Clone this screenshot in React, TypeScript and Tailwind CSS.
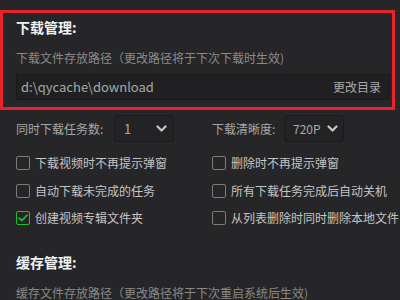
import React from "react";

const font = { fontFamily: '"Noto Sans CJK SC", "Noto Sans", sans-serif' };

function Chevron() {
  return (
    <svg width="11" height="8" viewBox="0 0 11 8" className="shrink-0">
      <polyline points="1.5,1.5 5.5,5.5 9.5,1.5" fill="none" stroke="#c8c8c8" strokeWidth="2.2" strokeLinecap="round" strokeLinejoin="round" />
    </svg>
  );
}

function Check({ label, checked }: { label: string; checked?: boolean }) {
  return (
    <div className="flex items-center h-[20px] whitespace-nowrap">
      <div
        className={
          checked
            ? "w-[14px] h-[14px] rounded-[2px] border-[1.5px] border-[#1fc02b] flex items-center justify-center shrink-0"
            : "w-[14px] h-[14px] rounded-[2px] border-[1.5px] border-[#7c7c7c] shrink-0"
        }
      >
        {checked && (
          <svg width="10" height="8" viewBox="0 0 10 8">
            <polyline points="1,4 3.8,6.6 9,1.2" fill="none" stroke="#1fc02b" strokeWidth="1.6" strokeLinecap="round" strokeLinejoin="round" />
          </svg>
        )}
      </div>
      <span className="ml-[5px] text-[12px] leading-[20px] text-[#c4c4c4]">{label}</span>
    </div>
  );
}

export default function App() {
  return (
    <div className="w-[400px] h-[300px] overflow-hidden bg-[#262628]" style={font}>
      <div className="pt-[10px]">
        <div className="w-[395px] h-[100px] border-[3px] border-[#e8222a] pl-[13px] pr-[2px] pt-[4px]">
          <div className="text-[14px] leading-[20px] font-semibold text-[#f2f2f2]">下载管理:</div>
          <div className="mt-[13px] text-[12px] leading-[16px] text-[#8a8a8a] whitespace-nowrap">
            下载文件存放路径（更改路径将于下次下载时生效)
          </div>
          <div className="mt-[8px] h-[26px] border border-[#1a1a1a] bg-[#202022] flex items-center justify-between pl-[4px] pr-[8px]">
            <span className="text-[13px] text-[#a8a8a8]">d:\qycache\download</span>
            <span className="text-[12px] text-[#a8a8a8]">更改目录</span>
          </div>
        </div>
      </div>

      <div className="pl-[16px]">
        <div className="grid grid-cols-[196px_1fr] mt-[5px]">
          <div className="flex items-center">
            <span className="text-[12px] text-[#a6a6a6] w-[98px] whitespace-nowrap">同时下载任务数:</span>
            <div className="w-[60px] h-[27px] rounded-[3px] border border-[#1a1a1a] bg-[#232325] flex items-center justify-between pl-[9px] pr-[6px]">
              <span className="text-[13px] text-[#aaaaaa]">1</span>
              <Chevron />
            </div>
          </div>
          <div className="flex items-center">
            <span className="text-[12px] text-[#a6a6a6] w-[72px] whitespace-nowrap">下载清晰度:</span>
            <div className="w-[60px] h-[27px] rounded-[3px] border border-[#1a1a1a] bg-[#232325] flex items-center justify-between pl-[8px] pr-[5px]">
              <span className="text-[12px] text-[#aaaaaa]">720P</span>
              <Chevron />
            </div>
          </div>
        </div>

        <div className="grid grid-cols-[196px_1fr] gap-y-[7.5px] mt-[11px]">
          <Check label="下载视频时不再提示弹窗" />
          <Check label="删除时不再提示弹窗" />
          <Check label="自动下载未完成的任务" />
          <Check label="所有下载任务完成后自动关机" />
          <Check label="创建视频专辑文件夹" checked />
          <Check label="从列表删除时同时删除本地文件" />
        </div>

        <div className="mt-[24px] text-[14px] leading-[20px] font-semibold text-[#f2f2f2]">缓存管理:</div>
        <div className="mt-[13px] text-[12px] leading-[16px] text-[#8a8a8a] whitespace-nowrap">
          缓存文件存放路径（更改路径将于下次重启系统后生效)
        </div>
      </div>
    </div>
  );
}
